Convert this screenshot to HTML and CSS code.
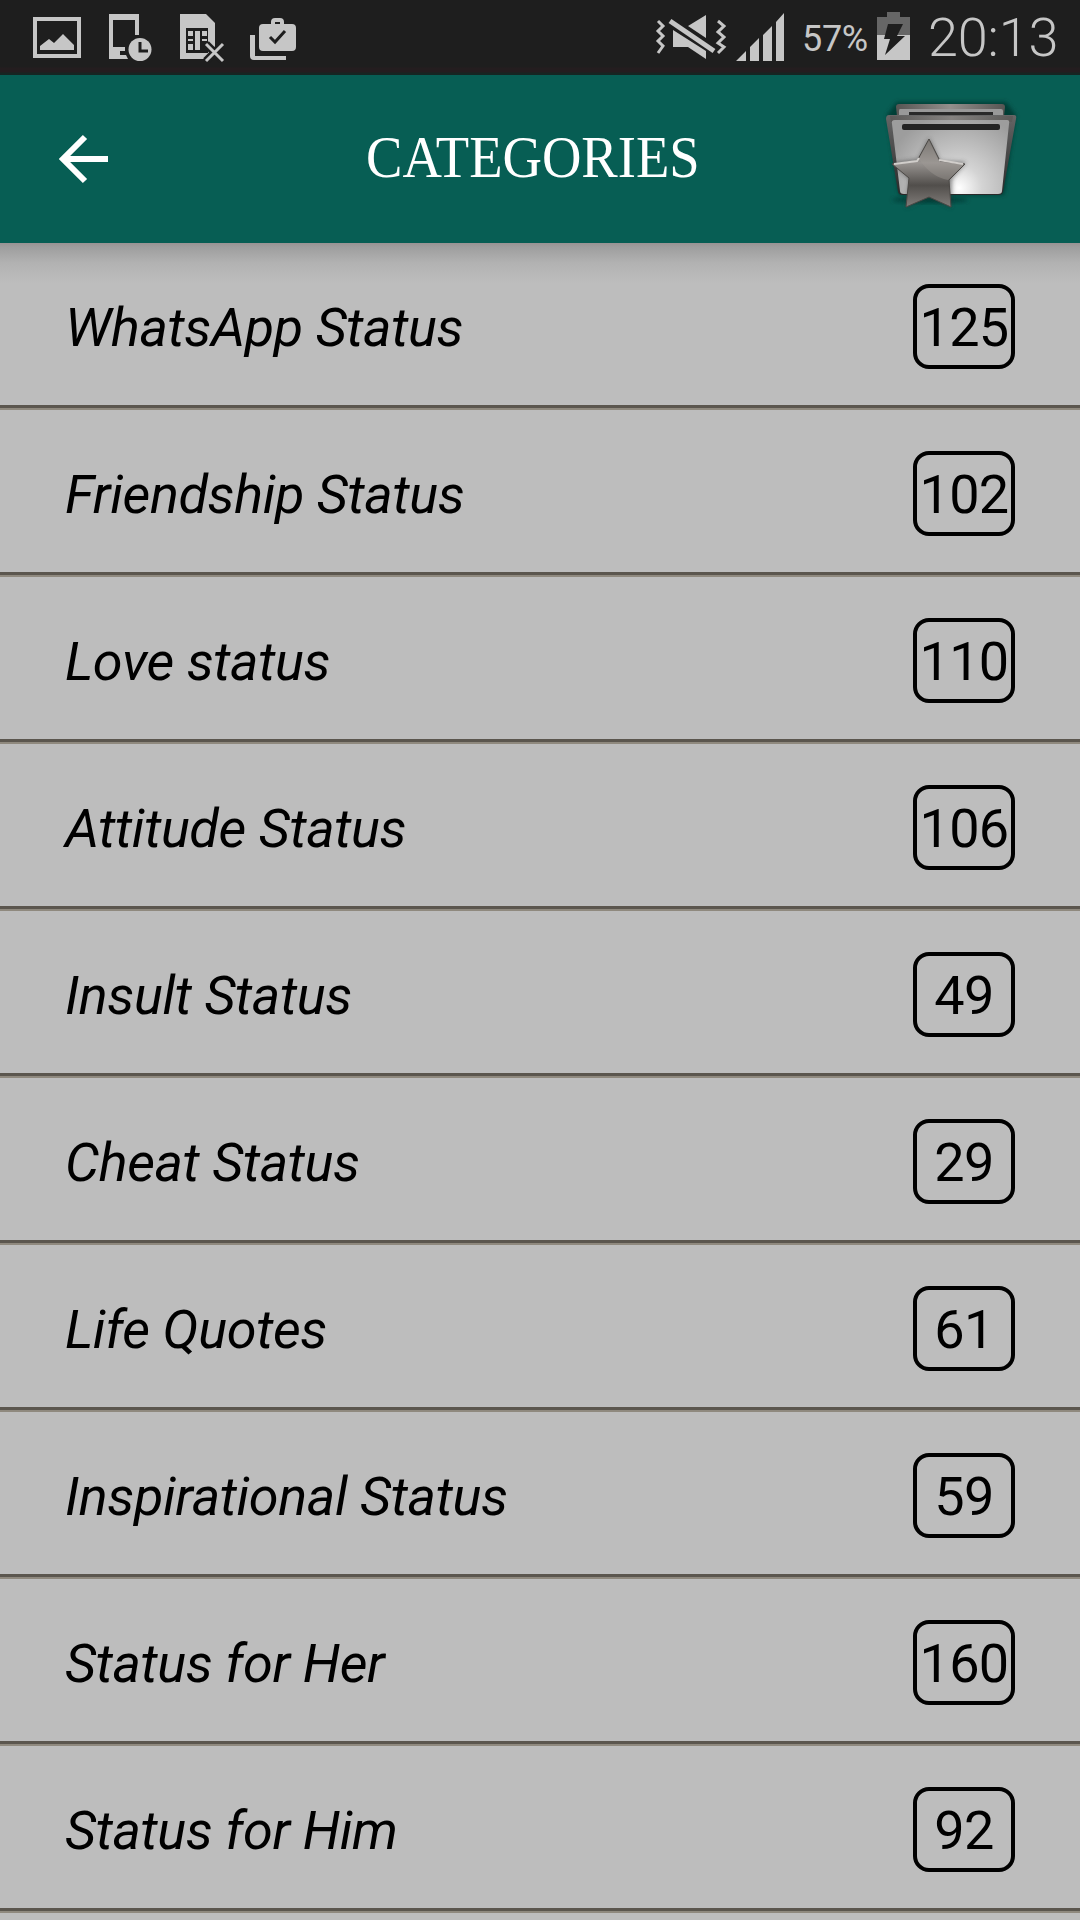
FILE: index.html
```html
<!DOCTYPE html>
<html lang="en">

<head>
    <meta charset="UTF-8">
    <meta name="viewport" content="width=device-width, initial-scale=1.0">
    <title>Categories</title>
    <link rel="stylesheet" href="styles.css">
</head>

<body>

    <div class="status-bar">
        <div class="notifications">
            <svg width="48" height="75" viewBox="33 0 48 75">
                <path fill-rule="evenodd" d="M33 17h48v41H33zM37 21v33h40V21z" />
                <path d="M40 50v-4l9-7 5 4 9-9 11 11v5z" />
            </svg>
            <svg width="43" height="75" viewBox="109 0 43 75">
                <path d="M109 14h30v21h-4V20h-22v27h12v4h-5v4h6l2 4h-19z" />
                <circle cx="140" cy="49.500" r="11.500" />
                <path class="cut" d="M140 42v9h8" />
            </svg>
            <svg width="42" height="75" viewBox="180 0 42 75">
                <path d="M180 14h26l9 9v25l-9 11h-26z" />
                <path class="hole" d="M186 28h22v25h-22z" />
                <path d="M188 31h5v5h-5zM188 39h5v2h-5zM188 44h5v6h-5zM195 31h5v19h-5zM202 31h5v5h-5zM202 39h5v2h-5z" />
                <path class="cross-gap" d="M206 44l17 17M223 44l-17 17" />
                <path class="cross" d="M206 44l17 17M223 44l-17 17" />
            </svg>
            <svg width="46" height="75" viewBox="250 0 46 75">
                <path d="M250 35h5v21h31v4h-32q-4 0-4-4z" />
                <path fill-rule="evenodd" d="M263 24h8v-2q0-4 4-4h5q4 0 4 4v2h8q4 0 4 4v19q0 4-4 4h-29q-4 0-4-4V28q0-4 4-4zM275 24h5v-2h-5z" />
                <path class="check" d="M270 37l5 5 10-11" />
            </svg>
        </div>
        <div class="system">
            <svg class="sound" width="70" height="75" viewBox="656 0 70 75">
                <path d="M673 30l33 21v8l-18-12h-15zM688 26l18-11v23z" />
                <path class="slash" d="M670 21l44 30" />
                <path class="wave" d="M658 21l5 5-5 5 5 5-5 5 5 5-5 7M718 21l6 5-6 6 6 5-6 6 6 4-6 6" />
            </svg>
            <svg class="signal" width="48" height="75" viewBox="736 0 48 75">
                <path d="M736 61l10-10v10zM750 61V47l9-9v23zM763 61V35l9-9v35zM776 61V22l8-9v48z" />
            </svg>
            <span class="percent">57%</span>
            <svg class="battery" width="33" height="75" viewBox="877 0 33 75">
                <path class="empty" d="M887 12h13v5h10v18h-33V17h10z" />
                <path d="M877 35h33v25h-33z" />
                <path class="hole" d="M888 24h15l-6 12h8l-20 19 5-16h-6z" />
            </svg>
            <span class="clock">20:13</span>
        </div>
    </div>

    <div class="header">
        <svg class="back" width="48" height="48" viewBox="0 0 48 48">
            <path d="M25 2L3 24l22 22M3 24h45" />
        </svg>
        <h1>CATEGORIES</h1>
        <!-- Favourites folder -->
        <svg class="folder" width="140" height="110" viewBox="880 98 140 110">
            <defs>
                <linearGradient id="frame" x1="0" y1="0" x2="0" y2="1">
                    <stop offset="0" stop-color="#666" />
                    <stop offset="1" stop-color="#292929" />
                </linearGradient>
                <linearGradient id="rim">
                    <stop offset="0" stop-color="#575553" />
                    <stop offset=".5" stop-color="#938f8c" />
                    <stop offset="1" stop-color="#575553" />
                </linearGradient>
                <radialGradient id="paper" gradientUnits="userSpaceOnUse" cx="959" cy="188" r="76">
                    <stop offset="0" stop-color="#fff" />
                    <stop offset=".3" stop-color="#d4d4d4" />
                    <stop offset="1" stop-color="#9d9d9d" />
                </radialGradient>
                <linearGradient id="star" x1="0" y1="0" x2="0" y2="1">
                    <stop offset="0" stop-color="#625f5c" />
                    <stop offset=".35" stop-color="#989491" />
                    <stop offset=".68" stop-color="#514e4b" />
                    <stop offset="1" stop-color="#817d7a" />
                </linearGradient>
                <filter id="soft" x="-20%" y="-20%" width="140%" height="140%">
                    <feGaussianBlur stdDeviation="2" />
                </filter>
            </defs>
            <ellipse cx="930" cy="200" rx="38" ry="3" fill="#033e38" filter="url(#soft)" />
            <path d="M887 115l12 80h105l12-80-10-13H897z" fill="#023e36" filter="url(#soft)" />
            <path d="M899 104h103q3 0 3 3l-2 18H898l-2-18q0-3 3-3z" fill="url(#rim)" />
            <path d="M900 109h101q2 0 2 2v9H899v-9q0-2 1-2z" fill="#999" />
            <path d="M909 112h84v4h-84z" fill="#292929" />
            <path d="M889 115h125q3 0 2 4l-13 73q-1 3-4 3h-97q-3 0-4-3l-12-73q0-4 3-4z" fill="url(#frame)" />
            <path d="M890 116h123l-1 6H891z" fill="url(#rim)" opacity=".7" />
            <path d="M895 120h112q3 0 2 4l-7 67q0 3-4 3h-94q-4 0-4-3l-8-67q-1-4 3-4z" fill="url(#paper)" />
            <rect x="902" y="124" width="98" height="6" rx="2" fill="#242424" />
            <path d="M929 138l11 23 26 1-14 17-1 29-22-11-23 11 3-29-17-16 26-4z" fill="#333" opacity=".55" filter="url(#soft)" />
            <path d="M929 139l11 22 25 3-16 16 2 27-22-10-23 10 3-29-17-14 25-3z" fill="url(#star)" stroke="#4b4845" />
            <path d="M929 140l10 22 24 3-15 15q-17-3-29-21z" fill="#a09b97" opacity=".4" />
            <path d="M894 164l23-3 2-3M939 160l24 4" fill="none" stroke="#d1cecb" stroke-width="2" />
        </svg>
    </div>

    <div class="list">
        <div class="row"><span class="name">WhatsApp Status</span><span class="count">125</span></div>
        <div class="row"><span class="name">Friendship Status</span><span class="count">102</span></div>
        <div class="row"><span class="name">Love status</span><span class="count">110</span></div>
        <div class="row"><span class="name">Attitude Status</span><span class="count">106</span></div>
        <div class="row"><span class="name">Insult Status</span><span class="count">49</span></div>
        <div class="row"><span class="name">Cheat Status</span><span class="count">29</span></div>
        <div class="row"><span class="name">Life Quotes</span><span class="count">61</span></div>
        <div class="row"><span class="name">Inspirational Status</span><span class="count">59</span></div>
        <div class="row"><span class="name">Status for Her</span><span class="count">160</span></div>
        <div class="row"><span class="name">Status for Him</span><span class="count">92</span></div>
    </div>

</body>

</html>
```
FILE: styles.css
```css
* {
    box-sizing: border-box;
}

body {
    margin: 0;
    height: 1920px;
    overflow: hidden;
    font-family: Roboto, sans-serif;
    background-color: #bdbdbd;
}

svg {
    display: block;
    flex-shrink: 0;
    overflow: visible;
}

.status-bar {
    display: flex;
    justify-content: space-between;
    height: 75px;
    padding: 0 22px 0 33px;
    background: linear-gradient(#1e1e1e 67px, #241d1f 68px, #241d1f 72px, #162522 73px);
    color: #c6c6c6;
    fill: #c6c6c6;
}

.notifications {
    display: flex;
    gap: 28px;
}

.system {
    display: flex;
}

.hole {
    fill: #1e1e1e;
}

.cut,
.check,
.cross,
.cross-gap,
.wave,
.slash {
    fill: none;
    stroke: #c6c6c6;
    stroke-width: 3;
}

.cut,
.check {
    stroke: #1e1e1e;
}

.cross-gap {
    stroke: #1e1e1e;
    stroke-width: 8;
}

.slash {
    stroke-width: 5;
}

.empty {
    fill: #666;
}

.sound {
    margin-right: 10px;
}

.signal {
    margin-right: 18px;
}

.percent {
    width: 75px;
    font-size: 36px;
    line-height: 78px;
    letter-spacing: -0.3px;
}

.clock {
    width: 148px;
    padding-left: 18px;
    font-size: 54px;
    font-weight: 300;
    line-height: 75px;
    letter-spacing: -0.2px;
}

.header {
    display: flex;
    align-items: center;
    height: 168px;
    padding-left: 60px;
    background-color: #075e54;
}

.back {
    fill: none;
    stroke: #fff;
    stroke-width: 6;
}

h1 {
    width: 380px;
    margin: 0 134px 4px 258px;
    color: #fff;
    font-family: "Liberation Serif", serif;
    font-size: 60px;
    font-weight: normal;
    line-height: 70px;
    transform: scaleX(0.91);
    transform-origin: left;
}

.folder {
    margin-bottom: 12px;
}

.list {
    /* shadow under the header */
    background: linear-gradient(#999394, #9e9e9e 4px, #b2b2b2 20px, #bdbdbd 40px);
}

.row {
    display: flex;
    justify-content: space-between;
    align-items: center;
    height: 167px;
    padding: 1px 65px 0 65px;
    border-bottom: 2px solid #8f897e;
    box-shadow: inset 0 -3px #5b564e;
    font-size: 54px;
}

.name {
    padding-top: 2px;
    font-style: italic;
    letter-spacing: -0.4px;
}

.count {
    width: 102px;
    height: 85px;
    border: 4px solid #000;
    border-radius: 16px;
    text-align: center;
    line-height: 79px;
    letter-spacing: -0.7px;
}
```
